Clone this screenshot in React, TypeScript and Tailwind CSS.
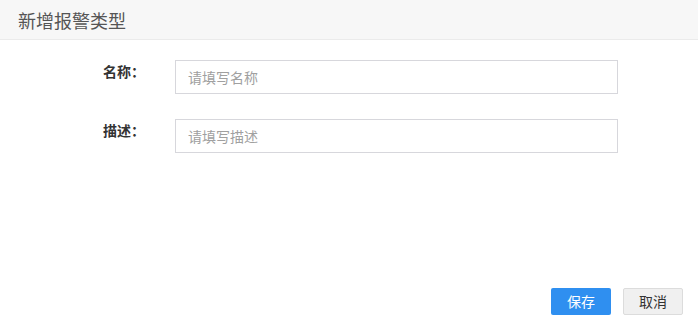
export default function App() {
  const font = { fontFamily: '"Noto Sans CJK SC", "Microsoft YaHei", sans-serif' };
  return (
    <div className="flex h-[327px] w-[698px] flex-col bg-white text-[#333]" style={font}>
      <header className="flex h-[40px] items-center border-b border-[#ebebeb] bg-[#f7f7f7] pl-[18px]">
        <h1 className="text-[18px] font-normal leading-none text-[#555]">新增报警类型</h1>
      </header>

      <form className="flex flex-col gap-[25px] pt-[20px]">
        <div className="flex items-start">
          <label className="ml-[103px] w-[72px] text-[14px] font-bold leading-[22px]">名称：</label>
          <input
            placeholder="请填写名称"
            className="h-[34px] w-[443px] border border-[#d7d7dc] px-[12px] text-[14px] outline-none placeholder:text-[#a0a0a0]"
          />
        </div>
        <div className="flex items-start">
          <label className="ml-[103px] w-[72px] text-[14px] font-bold leading-[22px]">描述：</label>
          <input
            placeholder="请填写描述"
            className="h-[34px] w-[443px] border border-[#d7d7dc] px-[12px] text-[14px] outline-none placeholder:text-[#a0a0a0]"
          />
        </div>
      </form>

      <footer className="mt-auto flex justify-end gap-[12px] pb-[12px] pr-[15px]">
        <button className="h-[27px] w-[60px] rounded-[2px] bg-[#2f8ff0] text-[14px] text-white">保存</button>
        <button className="h-[27px] w-[60px] rounded-[2px] border border-[#dcdcdc] bg-[#f0f0f0] text-[14px] text-[#333]">取消</button>
      </footer>
    </div>
  );
}
